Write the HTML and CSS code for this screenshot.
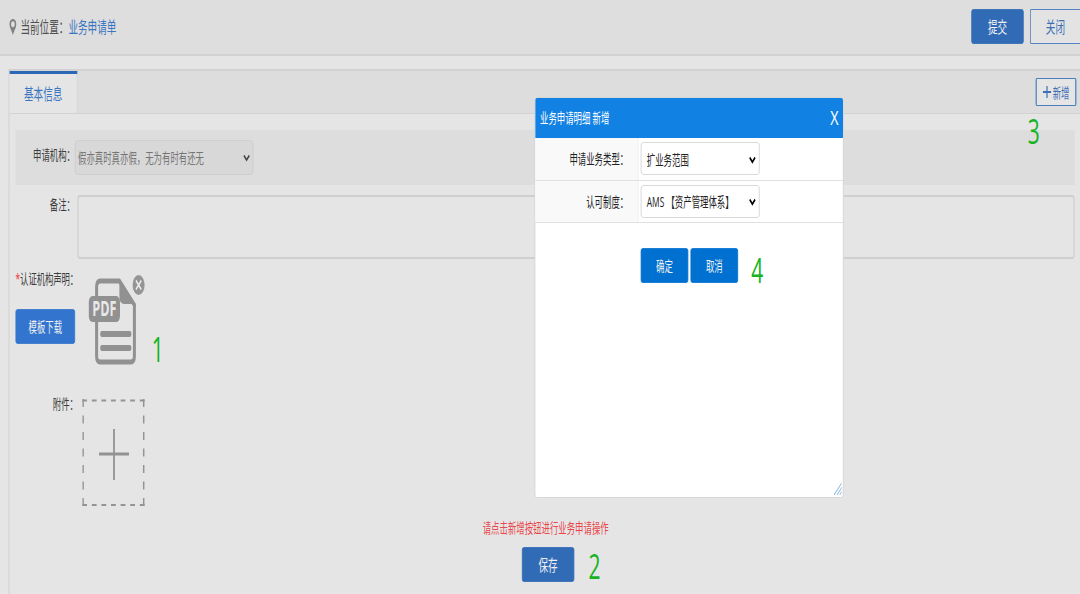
FILE: index.html
```html
<!DOCTYPE html>
<html lang="zh-CN">
<head>
    <meta charset="UTF-8">
    <meta name="viewport" content="width=device-width, initial-scale=1.0">
    <title>业务申请单</title>
    <link rel="stylesheet" href="styles.css">
</head>
<body>
    <div class="screen">
        <header class="topbar">
            <div class="position">
                <svg class="pin" width="13" height="16" viewBox="0 0 13 16">
                    <path d="M6.5 0C3 0 .8 2.4.8 5.3c0 3.400 3.700 6.500 5.700 10.700 2-4.200 5.700-7.300 5.700-10.700C12.200 2.400 10 0 6.500 0zm0 8.300a3 3 0 1 1 0-6 3 3 0 0 1 0 6z" fill="#828282"/>
                </svg>
                <span>当前位置：</span><a class="link">业务申请单</a>
            </div>
            <button class="btn btn-dark">提交</button>
            <button class="btn btn-line">关闭</button>
        </header>

        <main class="panel">
            <div class="tabs">
                <div class="tab">基本信息</div>
                <button class="btn-add">
                    <svg width="14" height="12" viewBox="0 0 14 12"><path d="M7 0v12M0 6h14" stroke="#3d6fb5" stroke-width="2"/></svg>
                    <span>新增</span>
                </button>
            </div>

            <div class="form">
                <div class="row row-org">
                    <label>申请机构：</label>
                    <div class="select disabled">
                        <span>假亦真时真亦假，无为有时有还无</span>
                        <svg class="arrow" width="12" height="8" viewBox="0 0 12 8"><path d="M1.500 1.500L6 6l4.500-4.500" fill="none" stroke="#444" stroke-width="2.200"/></svg>
                    </div>
                </div>

                <div class="row row-remark">
                    <label>备注：</label>
                    <div class="textarea"></div>
                </div>

                <div class="row row-file">
                    <div class="file-left">
                        <label><i>*</i>认证机构声明：</label>
                        <button class="btn btn-download">模板下载</button>
                    </div>
                    <div class="pdf">
                        <svg width="80" height="88" viewBox="0 0 80 88">
                            <path d="M18 3H50L75 27V78q0 6-6 6H18q-6 0-6-6V9q0-6 6-6z" fill="none" stroke="#919191" stroke-width="5"/>
                            <path d="M50 1L77 26H58q-8 0-8-8z" fill="#919191"/>
                            <rect x="-1" y="18" width="52" height="26" rx="6" fill="#919191"/>
                            <path d="M21 56H67M21 70H67" stroke="#919191" stroke-width="6" stroke-linecap="round"/>
                            <text x="25" y="38" class="pdf-text" text-anchor="middle">PDF</text>
                        </svg>
                        <svg class="remove" width="20" height="20" viewBox="0 0 20 20">
                            <circle cx="10" cy="10" r="10" fill="#959595"/>
                            <path d="M5.500 5.500l9 9M14.500 5.500l-9 9" stroke="#eee" stroke-width="2"/>
                        </svg>
                    </div>
                </div>

                <div class="row row-attach">
                    <label>附件：</label>
                    <svg width="105" height="108" viewBox="0 0 105 108">
                        <path d="M0 1.500H104M0 106H104" stroke="#949494" stroke-width="2" stroke-dasharray="8 8"/>
                        <path d="M1.500 0V107M102.500 0V107" stroke="#949494" stroke-width="2.500" stroke-dasharray="8 8.500"/>
                        <path d="M53 30V81" stroke="#929292" stroke-width="3"/>
                        <path d="M28 55H78" stroke="#929292" stroke-width="3"/>
                    </svg>
                </div>
            </div>

            <footer class="save">
                <p class="tip">请点击新增按钮进行业务申请操作</p>
                <button class="btn btn-dark">保存</button>
            </footer>
        </main>

        <div class="dialog">
            <div class="dialog-head">
                <span>业务申请明细 新增</span>
                <span class="dialog-close">X</span>
            </div>
            <div class="dialog-row">
                <div class="dialog-label">申请业务类型：</div>
                <div class="select">
                    <span>扩业务范围</span>
                    <svg class="arrow" width="12" height="8" viewBox="0 0 12 8"><path d="M1.500 1.500L6 6l4.500-4.500" fill="none" stroke="#000" stroke-width="2.400"/></svg>
                </div>
            </div>
            <div class="dialog-row">
                <div class="dialog-label">认可制度：</div>
                <div class="select">
                    <span>AMS 【资产管理体系】</span>
                    <svg class="arrow" width="12" height="8" viewBox="0 0 12 8"><path d="M1.500 1.500L6 6l4.500-4.500" fill="none" stroke="#000" stroke-width="2.400"/></svg>
                </div>
            </div>
            <div class="dialog-btns">
                <button class="btn btn-blue">确定</button>
                <button class="btn btn-blue">取消</button>
            </div>
            <svg class="grip" width="13" height="12" viewBox="0 0 13 12">
                <path d="M0 12L13 0M5 12L13 4.500M9.500 12L13 8.500" stroke="#8fbde2" stroke-width="1.300"/>
            </svg>
        </div>

        <span class="step step-1">1</span>
        <span class="step step-2">2</span>
        <span class="step step-3">3</span>
        <span class="step step-4">4</span>
    </div>
</body>
</html>
```
FILE: styles.css
```css
*{
    box-sizing: border-box;
}

html{
    overflow: hidden;
}

body{
    margin: 0;
    width: 1080px;
    height: 594px;
    overflow: clip;
    background-color: #e5e5e5;
    font-family: "Open Sans", "Noto Sans CJK SC", sans-serif;
}

/* 1800px wide layout, narrowed to fit the window */
.screen{
    position: relative;
    width: 1800px;
    height: 594px;
    margin-right: -720px;
    overflow: hidden;
    transform: scaleX(0.6);
    transform-origin: 0 0;
    font-size: 14px;
    line-height: 20px;
    color: #3c3c3c;
}

button{
    font-family: inherit;
    margin: 0;
    padding: 0;
}

svg{
    display: block;
    flex-shrink: 0;
}

.topbar{
    display: flex;
    gap: 10px;
    height: 56px;
    padding: 9px 0 0 15px;
    background-color: #dedede;
    border-bottom: 2px solid #d2d2d2;
    font-size: 16px;
}

.position{
    display: flex;
    align-items: center;
    width: 1594px;
    height: 36px;
    flex-shrink: 0;
    color: #505050;
}

.pin{
    margin-right: 6px;
}

.link{
    color: #3b76c0;
}

.btn{
    width: 87px;
    height: 35px;
    flex-shrink: 0;
    padding-bottom: 2px;
    border: 1px solid #2f6ab5;
    border-radius: 3px;
    font-size: 16px;
    color: #f0f0f0;
}

.btn-dark{
    background-color: #316bb6;
}

/* sits against the right edge of the window */
.btn-line{
    width: 84px;
    background-color: #e3e3e3;
    border-color: #5584c2;
    border-left-width: 2px;
    border-right: none;
    border-radius: 3px 0 0 3px;
    color: #3b70b5;
}

.panel{
    height: 525px;
    margin: 13px 0 0 14px;
    border-top: 2px solid #d2d2d2;
    border-left: 2px solid #d4d4d4;
}

.tabs{
    display: flex;
    justify-content: space-between;
    height: 43px;
    padding-right: 6px;
    background-color: #dddddd;
    border-bottom: 1px solid #d2d2d2;
}

.tab{
    width: 113px;
    height: 42px;
    padding-top: 9px;
    padding-left: 24px;
    border-top: 3px solid #2c67b5;
    border-right: 1px solid #d2d2d2;
    background-color: #e5e5e5;
    font-size: 16px;
    line-height: 22px;
    color: #3b76c0;
}

.btn-add{
    display: flex;
    align-items: center;
    justify-content: center;
    gap: 3px;
    width: 68px;
    height: 28px;
    margin-top: 7px;
    padding-bottom: 1px;
    background-color: #e5e5e5;
    border: 1px solid #4b7cbc;
    border-left-width: 2px;
    border-right-width: 2px;
    border-radius: 2px;
    font-size: 14px;
    color: #3d6fb5;
}

.form{
    padding: 16px 9px 0 10px;
}

.row{
    display: flex;
}

.row-org{
    height: 55px;
    padding-top: 10px;
    background-color: #dddddd;
}

.row-org label{
    width: 99px;
    padding-top: 5px;
    text-align: right;
}

.select{
    display: flex;
    align-items: center;
    justify-content: space-between;
    width: 198px;
    height: 33px;
    padding: 2px 5px 0 9px;
    border: 1px solid #cfcfcf;
    border-radius: 4px;
    background-color: #fff;
    color: #222;
    white-space: nowrap;
}

.disabled{
    width: 297px;
    height: 35px;
    padding: 1px 4px 0 4px;
    background-color: #d8d8d8;
    border-color: #cccccc;
    color: #757575;
}

.row-remark{
    height: 64px;
    margin-top: 10px;
}

.row-remark label{
    width: 99px;
    margin-right: 4px;
    text-align: right;
}

.textarea{
    flex: 1;
    border: 2px solid #cfcfcf;
    border-radius: 4px;
}

.row-file{
    height: 130px;
    padding-top: 10px;
}

.file-left{
    width: 123px;
}

.file-left label{
    display: block;
    white-space: nowrap;
    letter-spacing: -0.2px;
}

.file-left i{
    color: #e33;
    font-style: normal;
}

.btn-download{
    width: 99px;
    margin-top: 20px;
    background-color: #3375ce;
    border-color: #3375ce;
    font-size: 14px;
}

.pdf{
    position: relative;
    width: 80px;
    padding-top: 9px;
}

.pdf svg{
    overflow: visible;
}

.pdf-text{
    font-size: 21px;
    font-weight: bold;
    fill: #e8e8e8;
}

/* remove badge over the file corner */
.remove{
    position: absolute;
    top: 6px;
    right: -12px;
}

.row-attach{
    height: 108px;
    margin-top: 10px;
    gap: 7px;
}

.row-attach label{
    width: 104px;
    margin-top: -5px;
    text-align: right;
}

.save{
    display: flex;
    flex-direction: column;
    align-items: center;
    gap: 9px;
    margin-top: 11px;
    padding-left: 11px;
}

.tip{
    margin: 0 8px 0 0;
    color: #e8464a;
}

.dialog{
    position: absolute;
    left: 891px;
    top: 97px;
    width: 515px;
    height: 401px;
    background-color: #fff;
    border: 1px solid #cfcfcf;
    border-radius: 4px;
    overflow: hidden;
    color: #222;
}

.dialog-head{
    display: flex;
    align-items: center;
    justify-content: space-between;
    height: 40px;
    padding: 0 8px 0 8px;
    background-color: #1181e3;
    color: #fff;
}

.dialog-close{
    font-size: 20px;
    transform: scaleX(1.2);
}

.dialog-row{
    display: flex;
    align-items: center;
    gap: 4px;
    height: 42.500px;
    border-bottom: 1px solid #e0e0e0;
}

.dialog-label{
    width: 172px;
    height: 41.500px;
    padding-right: 16px;
    border-right: 1px solid #e8e8e8;
    background-color: #f9f9f9;
    line-height: 42px;
    text-align: right;
}

.dialog-btns{
    display: flex;
    gap: 4px;
    padding: 25px 0 0 176px;
}

.btn-blue{
    width: 79px;
    background-color: #0071d0;
    border-color: #0071d0;
    font-size: 14px;
}

.grip{
    position: absolute;
    right: 2px;
    bottom: 2px;
}

/* step numbers drawn over the page */
.step{
    position: absolute;
    font-size: 35px;
    line-height: 36px;
    color: #16b322;
}

.step-1{
    left: 253px;
    top: 331px;
}

.step-2{
    left: 981px;
    top: 548px;
}

.step-3{
    left: 1713px;
    top: 113px;
}

.step-4{
    left: 1252px;
    top: 252px;
}
```
